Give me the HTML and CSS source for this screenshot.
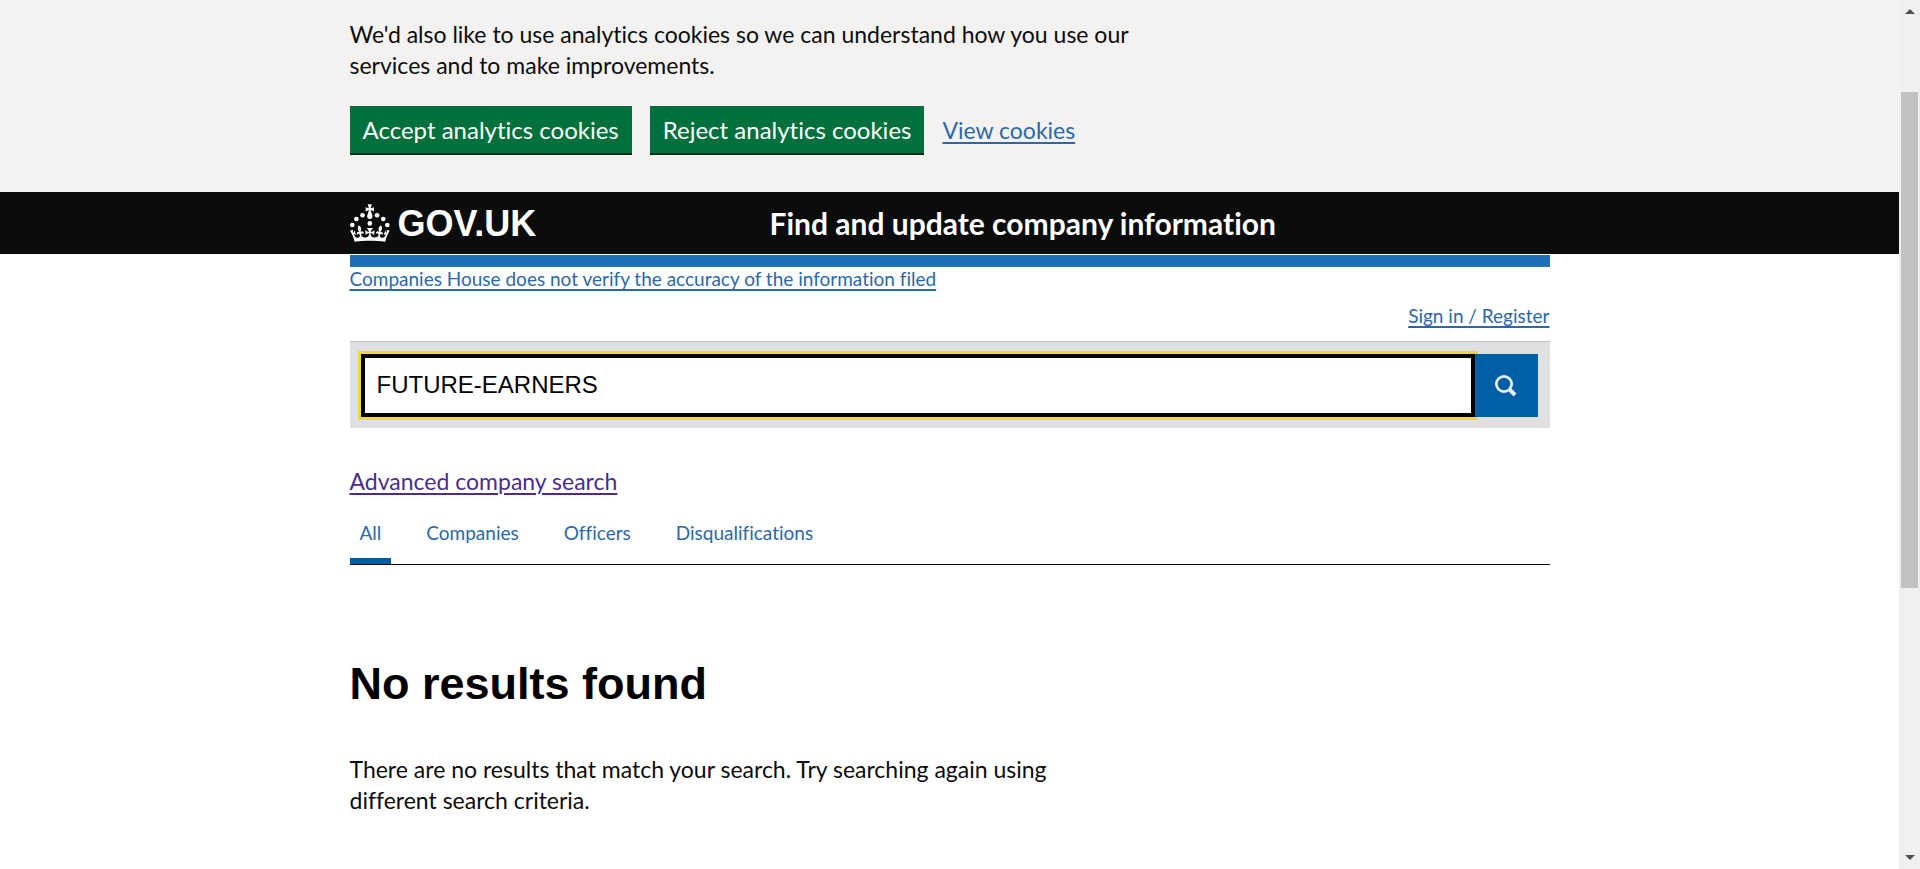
FILE: index.html
```html
<!DOCTYPE html>
<html lang="en">
<head>
    <meta charset="utf-8">
    <title>No results found - Find and update company information - GOV.UK</title>
    <link rel="stylesheet" href="styles.css">
</head>
<body>
    <div class="page">
        <!-- Cookie banner -->
        <div class="cookie-banner">
            <div class="container">
                <p class="cookie-text">We'd also like to use analytics cookies so we can understand how you use our services and to make improvements.</p>
                <div class="cookie-actions">
                    <button type="button" class="btn">Accept analytics cookies</button>
                    <button type="button" class="btn">Reject analytics cookies</button>
                    <a href="#">View cookies</a>
                </div>
            </div>
        </div>

        <!-- Header -->
        <header class="header">
            <div class="container header-inner">
                <a href="#" class="logo">
                    <svg class="crown" viewBox="0 0 64 60" fill="currentColor" aria-hidden="true">
                        <circle cx="20" cy="17.6" r="3.7"/>
                        <circle cx="10.2" cy="23.5" r="3.7"/>
                        <circle cx="3.7" cy="33.2" r="3.7"/>
                        <circle cx="31.7" cy="30.6" r="3.7"/>
                        <circle cx="43.3" cy="17.6" r="3.7"/>
                        <circle cx="53.2" cy="23.5" r="3.7"/>
                        <circle cx="59.7" cy="33.2" r="3.7"/>
                        <path d="M33.1,9.8c.2-.1.3-.3.5-.5l4.6,2.4v-6.8l-4.6,1.5c-.1-.2-.3-.3-.5-.5l1.9-5.9h-6.7l1.9,5.9c-.2.1-.3.3-.5.5l-4.6-1.5v6.8l4.6-2.4c.1.2.3.3.5.5l-2.6,8c-.9,2.8,1.2,5.7,4.1,5.7h0c3,0,5.1-2.9,4.1-5.7l-2.6-8ZM37,37.9s-3.4,3.8-4.1,6.1c2.2,0,4.2-.5,6.4-2.8l-.7,8.5c-2-2.8-4.4-4.1-5.7-3.8.1,3.1.5,6.7,5.8,7.2,3.7.3,6.7-1.5,7-3.8.4-2.6-2-4.3-3.7-1.6-1.4-4.5,2.4-6.1,4.9-3.2-1.9-4.5-1.8-7.7,2.4-10.9,3,4,2.6,7.3-1.2,11.1,2.4-1.3,6.2,0,4,4.6-1.2-2.8-3.7-2.2-4.2.2-.3,1.7.7,3.7,3,4.2,1.9.3,4.7-.9,7-5.9-1.3,0-2.4.7-3.9,1.7l2.4-8c.6,2.3,1.4,3.7,2.2,4.5.6-1.6.5-2.8,0-5.3l5,1.8c-2.6,3.6-5.2,8.7-7.3,17.5-7.4-1.1-15.7-1.7-24.5-1.7h0c-8.8,0-17.1.6-24.5,1.7-2.1-8.9-4.7-13.9-7.3-17.5l5-1.8c-.5,2.5-.6,3.7,0,5.3.8-.8,1.6-2.3,2.2-4.5l2.4,8c-1.5-1-2.6-1.7-3.9-1.7,2.3,5,5.2,6.2,7,5.9,2.3-.4,3.3-2.4,3-4.2-.5-2.4-3-3.1-4.2-.2-2.2-4.6,1.6-6,4-4.6-3.7-3.7-4.2-7.1-1.2-11.1,4.2,3.2,4.3,6.4,2.4,10.9,2.5-2.8,6.3-1.3,4.9,3.2-1.8-2.7-4.1-1-3.7,1.6.3,2.3,3.3,4.1,7,3.8,5.4-.5,5.7-4.2,5.8-7.2-1.3-.2-3.7,1-5.7,3.8l-.7-8.5c2.2,2.3,4.2,2.7,6.4,2.8-.7-2.3-4.1-6.1-4.1-6.1h10.6Z"/>
                    </svg>
                    <span>GOV.UK</span>
                </a>
                <a href="#" class="service-name">Find and update company information</a>
            </div>
        </header>

        <main class="container">
            <div class="header-bar"></div>
            <div class="notice"><a href="#">Companies House does not verify the accuracy of the information filed</a></div>
            <div class="sign-in"><a href="#">Sign in / Register</a></div>

            <!-- Search box -->
            <form class="search" action="#">
                <input type="text" class="search-input" name="q" value="FUTURE-EARNERS" aria-label="Search for a company or officer">
                <button type="submit" class="search-btn" aria-label="Search">
                    <svg width="22" height="22" viewBox="0 0 22 22" fill="none" stroke="currentColor" aria-hidden="true">
                        <circle cx="9" cy="9" r="7.6" stroke-width="2.8"/>
                        <path d="M14.5 14.5l5.5 5.5" stroke-width="4"/>
                    </svg>
                </button>
            </form>

            <div class="advanced"><a href="#">Advanced company search</a></div>

            <nav class="tabs">
                <a href="#" class="tab active">All</a>
                <a href="#" class="tab">Companies</a>
                <a href="#" class="tab">Officers</a>
                <a href="#" class="tab">Disqualifications</a>
            </nav>

            <h1>No results found</h1>
            <p class="message">There are no results that match your search. Try searching again using different search criteria.</p>
        </main>
    </div>

    <!-- Scrollbar -->
    <div class="scrollbar" aria-hidden="true">
        <div class="arrow arrow-up"></div>
        <div class="track"><div class="thumb"></div></div>
        <div class="arrow arrow-down"></div>
    </div>
</body>
</html>
```

FILE: styles.css
```css
* {
    box-sizing: border-box;
}

body {
    margin: 0;
    display: flex;
    height: 100vh;
    overflow: hidden;
    background: #fff;
    color: #0b0c0c;
    font-family: Lato, "Liberation Sans", sans-serif;
    font-size: 23px;
    line-height: 31px;
    font-variant-ligatures: none;
}

a {
    color: #2b68a8;
    text-underline-offset: 3px;
    text-decoration-thickness: 2px;
}

p {
    margin: 0;
}

.page {
    flex: 1;
    overflow: hidden;
}

.container {
    max-width: 1200px;
    margin: 0 auto;
}

/* Cookie banner */
.cookie-banner {
    background: #f3f2f1;
    padding: 19px 0 37px;
}

.cookie-text {
    max-width: 800px;
}

.cookie-actions {
    display: flex;
    align-items: center;
    gap: 18px;
    margin-top: 25px;
}

.btn {
    height: 47px;
    margin: 0 0 2px;
    padding: 0 13px;
    border: 0;
    background: #00703c;
    box-shadow: 0 2px 0 #002d18;
    color: #fff;
    font: inherit;
    font-size: 24px;
    cursor: pointer;
}

/* Header */
.header {
    background: #0b0c0c;
    color: #fff;
}

.header-inner {
    display: flex;
    align-items: center;
    height: 62px;
}

.header a {
    color: #fff;
    text-decoration: none;
    font-weight: bold;
}

.logo {
    display: flex;
    align-items: center;
    gap: 8px;
    width: 35%;
    font-family: "Liberation Sans", Arial, sans-serif;
    font-size: 36px;
}

.crown {
    width: 40px;
    height: 38px;
}

.service-name {
    font-size: 30px;
}

/* Main content */
.header-bar {
    height: 12px;
    margin-top: 1px;
    background: #1d70b8;
}

.notice,
.sign-in {
    font-size: 19px;
    line-height: 24px;
}

.sign-in {
    margin-top: 13px;
    text-align: right;
}

.search {
    display: flex;
    margin-top: 13px;
    padding: 12px 12px 11px 11px;
    border-top: 1px solid #bfc1c3;
    background: #dee0e2;
}

.search-input {
    flex: 1;
    height: 63px;
    padding: 0 12px 2px;
    border: 4px solid #000;
    border-radius: 0;
    outline: 3px solid #f0d932;
    background: #fff;
    color: #000;
    font-family: "Liberation Sans", Arial, sans-serif;
    font-size: 24px;
}

.search-btn {
    display: flex;
    align-items: center;
    justify-content: center;
    width: 63px;
    padding: 0;
    border: 0;
    background: #005ea5;
    color: #e3f1fb;
    cursor: pointer;
    z-index: 1;
}

.advanced {
    margin-top: 38px;
}

.advanced a {
    color: #4c2c92;
}

/* Tabs */
.tabs {
    display: flex;
    gap: 25px;
    margin-top: 23px;
    border-bottom: 1px solid #0b0c0c;
}

.tab {
    padding: 0 10px 12px;
    border-bottom: 6px solid transparent;
    font-size: 19px;
    line-height: 26px;
    text-decoration: none;
}

.tab.active {
    border-bottom-color: #005ea5;
}

h1 {
    margin: 93px 0 44px;
    color: #000;
    font-family: "Liberation Sans", Arial, sans-serif;
    font-size: 45px;
    line-height: 52px;
}

.message {
    max-width: 740px;
}

/* Scrollbar */
.scrollbar {
    display: flex;
    flex-direction: column;
    align-items: center;
    justify-content: space-between;
    width: 21px;
    padding: 9px 0;
    background: #f0f0f0;
}

.arrow {
    border: 5px solid transparent;
}

.arrow-up {
    border-top: 0;
    border-bottom-color: #505050;
}

.arrow-down {
    border-bottom: 0;
    border-top-color: #505050;
}

.track {
    flex: 1;
    align-self: stretch;
    padding: 78px 2px 0 2px;
}

/* percentage of the track left under its top padding */
.thumb {
    height: 65%;
    background: #c1c1c1;
}
```
